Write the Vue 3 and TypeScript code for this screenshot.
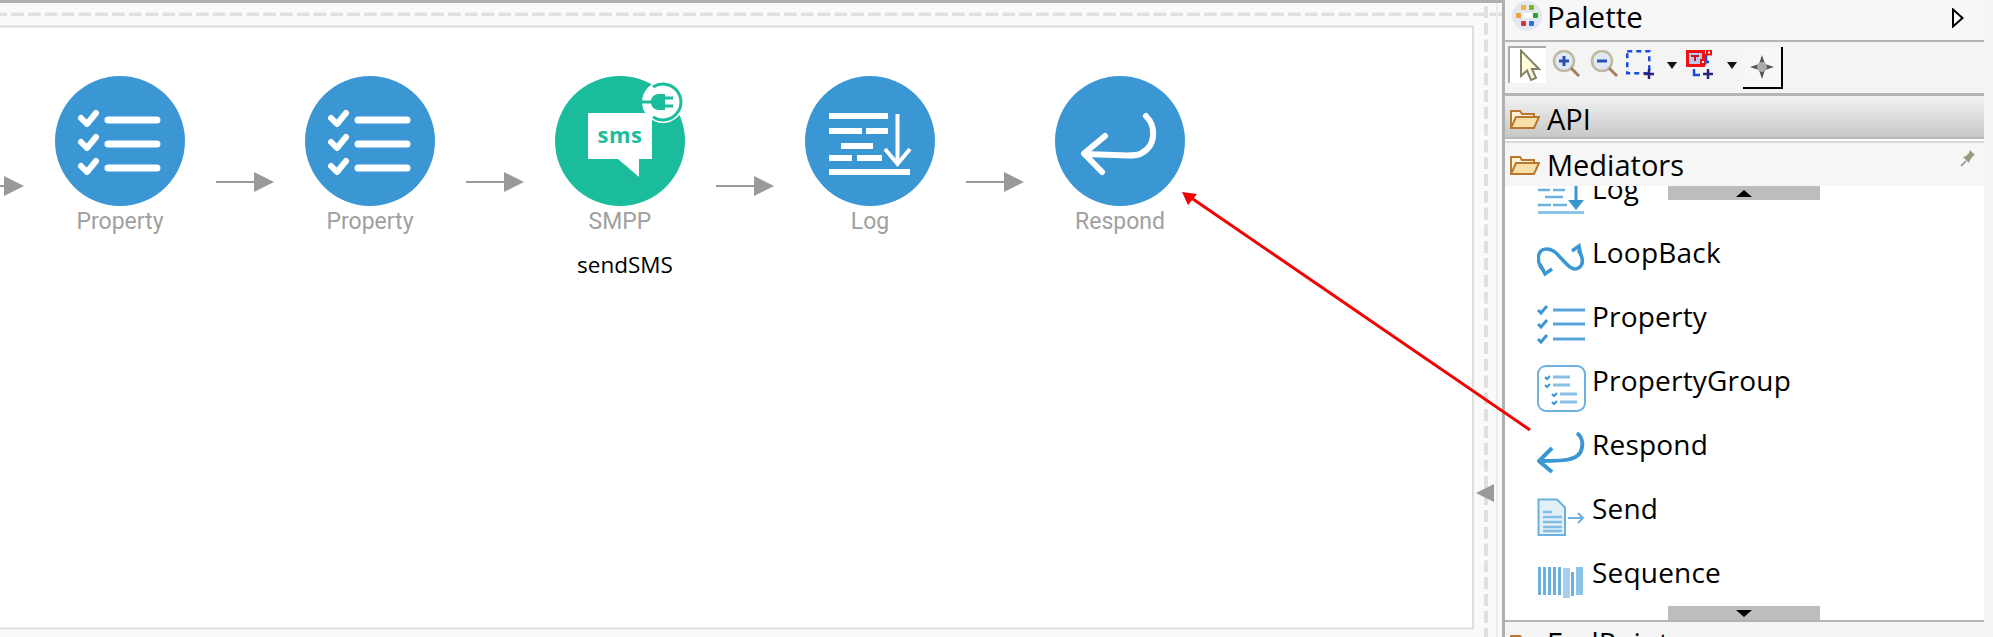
<script setup lang="ts">
interface Node { x: number; label: string; kind: string; caption?: string }
const nodes: Node[] = [
  { x: 120, label: 'Property', kind: 'prop' },
  { x: 370, label: 'Property', kind: 'prop' },
  { x: 620, label: 'SMPP', kind: 'smpp', caption: 'sendSMS' },
  { x: 870, label: 'Log', kind: 'log' },
  { x: 1120, label: 'Respond', kind: 'respond' },
]
const arrows = [
  { x1: -30, x2: 24, y: 186 },
  { x1: 216, x2: 274, y: 182 },
  { x1: 466, x2: 524, y: 182 },
  { x1: 716, x2: 774, y: 186 },
  { x1: 966, x2: 1024, y: 182 },
]
const items = ['Log', 'LoopBack', 'Property', 'PropertyGroup', 'Respond', 'Send', 'Sequence']
const dashesH = Array.from({ length: 90 }, (_, i) => i * 16.8 - 5.5)
const dashesV = Array.from({ length: 38 }, (_, i) => i * 16.8 + 6)
</script>

<template>
  <div class="page">
    <div class="editor">
      <svg class="canvas-deco" width="1502" height="637">
        <rect x="0" y="0" width="1502" height="3" fill="#b0b0b0" />
        <rect x="0" y="3" width="1502" height="634" fill="#fafafa" />
        <rect x="-4" y="26.5" width="1477" height="602" fill="#fff" stroke="#dedede" stroke-width="2" />
        <rect v-for="d in dashesH" :key="'h' + d" :x="d" y="12.5" width="12.5" height="3.5" fill="#e0e0e0" />
        <rect v-for="d in dashesV" :key="'v' + d" x="1484" :y="d" width="4" height="12" fill="#e0e0e0" />
        <rect x="1496" y="3" width="2" height="634" fill="#ececec" />
      </svg>

      <svg class="canvas-deco" width="1502" height="637">
        <g v-for="(a, i) in arrows" :key="i">
          <line :x1="a.x1" :y1="a.y" :x2="a.x2 - 18" :y2="a.y" stroke="#999" stroke-width="2" />
          <polygon :points="`${a.x2 - 20},${a.y - 10} ${a.x2},${a.y} ${a.x2 - 20},${a.y + 10}`" fill="#999" />
        </g>
        <g v-for="(n, i) in nodes" :key="'n' + i" :transform="`translate(${n.x} 141)`">
          <circle r="65" :fill="n.kind === 'smpp' ? '#1abc9c' : '#3a97d4'" />
          <g v-if="n.kind === 'prop'">
            <g v-for="y in [-21, 3, 27]" :key="y">
              <path :d="`M-39 ${y - 2}l6 6 9 -11`" fill="none" stroke="#fff" stroke-width="6" stroke-linecap="round" stroke-linejoin="round" />
              <line x1="-12" :y1="y" x2="37" :y2="y" stroke="#fff" stroke-width="7" stroke-linecap="round" />
            </g>
          </g>
          <g v-if="n.kind === 'log'" fill="#fff">
            <rect x="-41" y="-28" width="59" height="6" />
            <rect x="-41" y="-13" width="33" height="6" />
            <rect x="-4" y="-13" width="22" height="6" />
            <rect x="-29" y="2" width="32" height="6" />
            <rect x="-41" y="14" width="23" height="6" />
            <rect x="-13" y="14" width="25" height="6" />
            <rect x="-41" y="28" width="81" height="6" />
            <path d="M27.500 -27V23" fill="none" stroke="#fff" stroke-width="4" />
            <path d="M15 8l12.500 15 12.500 -15" fill="none" stroke="#fff" stroke-width="4" />
          </g>
          <g v-if="n.kind === 'respond'" fill="none" stroke="#fff" stroke-width="6" stroke-linecap="round" stroke-linejoin="round">
            <path d="M26 -25C36 -15 37 5 20 13C14 16 5 14 -35 13" />
            <path d="M-15 -5L-36 12.500L-18 31" />
          </g>
          <g v-if="n.kind === 'smpp'">
            <path d="M-32 -28H32V18H19V36L-2 18H-32Z" fill="#fff" />
            <text x="0" y="2" class="sms">sms</text>
            <circle cx="43" cy="-39" r="21" fill="#fff" />
            <path d="M33 -54a18 18 0 1 1 0 30" fill="none" stroke="#1abc9c" stroke-width="3" />
            <path d="M38 -47h7v16h-7a8 8 0 0 1 -7 -6.500h-9v-3h9a8 8 0 0 1 7 -6.500Z" fill="#1abc9c" />
            <path d="M45 -43h8M45 -35h8" stroke="#1abc9c" stroke-width="3" />
          </g>
        </g>
      </svg>

      <div
        v-for="(n, i) in nodes"
        :key="'l' + i"
        class="node-label"
        :style="{ left: n.x - 70 + 'px' }"
      >{{ n.label }}</div>
      <div class="node-caption">sendSMS</div>

      <div class="collapse"></div>
    </div>

    <aside class="palette">
      <header class="p-head">
        <svg class="p-logo" width="30" height="30" viewBox="0 0 30 30">
          <circle cx="15" cy="15" r="15" fill="#e2e8ef" />
          <rect x="11" y="12" width="9" height="5" fill="#fff" />
          <rect x="9" y="4" width="5" height="5" rx="1" fill="#e8b83a" /><rect x="17" y="4" width="5" height="5" rx="1" fill="#8ab030" />
          <rect x="4" y="12" width="5" height="5" rx="1" fill="#f0a030" /><rect x="21" y="12" width="5" height="5" rx="1" fill="#30a030" />
          <rect x="9" y="20" width="5" height="5" rx="1" fill="#d83040" /><rect x="17" y="20" width="5" height="5" rx="1" fill="#3070d8" />
        </svg>
        <span class="p-title">Palette</span>
        <svg class="p-collapse" width="12" height="20" viewBox="0 0 12 20"><path d="M1 1.500L10.500 10 1 18.500Z" fill="#fff" stroke="#000" stroke-width="2" /></svg>
      </header>

      <div class="toolbar">
        <div class="tool selected">
          <svg width="24" height="33" viewBox="0 0 24 33"><path d="M4 1.500V27L10 21.500 14 31 19 29 15 20H22Z" fill="#fdfbd8" stroke="#85806a" stroke-width="2" /></svg>
        </div>
        <svg class="t-icon t-zoom" width="28" height="28" viewBox="0 0 28 28">
          <circle cx="12" cy="11" r="10" fill="#dfe8f5" stroke="#c0b8a0" stroke-width="2.500" />
          <path d="M7 11h10M12 6v10" stroke="#2a50b0" stroke-width="3" />
          <path d="M19 18l8 8" stroke="#a08060" stroke-width="3" />
        </svg>
        <svg class="t-icon t-zoom2" width="28" height="28" viewBox="0 0 28 28">
          <circle cx="12" cy="11" r="10" fill="#dfe8f5" stroke="#c0b8a0" stroke-width="2.500" />
          <path d="M7 11h10" stroke="#2a50b0" stroke-width="3" />
          <path d="M19 18l8 8" stroke="#a08060" stroke-width="3" />
        </svg>
        <svg class="t-icon t-marquee" width="30" height="30" viewBox="0 0 30 30">
          <rect x="1.250" y="1.250" width="22" height="22" fill="none" stroke="#1a4ae0" stroke-width="2.500" stroke-dasharray="5 4" />
          <path d="M18 24h10M23 19v10" stroke="#2a2080" stroke-width="2.500" />
        </svg>
        <svg class="caret" width="10" height="7" viewBox="0 0 10 7"><path d="M0 0H10L5 7Z" fill="#111" /></svg>
        <svg class="t-icon t-conn" width="28" height="30" viewBox="0 0 28 30">
          <path d="M8 19v6h6M14 12h9M20 12V4" fill="none" stroke="#1a4ae0" stroke-width="2.500" />
          <rect x="1.500" y="1.500" width="16" height="14" fill="#b8c8f0" stroke="#f01010" stroke-width="3" />
          <path d="M5 6h8M9 6v5" stroke="#d01010" stroke-width="2" />
          <path d="M14 12h8" stroke="#1a4ae0" stroke-width="2.500" />
          <rect x="21" y="0.500" width="4" height="4" fill="#fff" stroke="#f01010" stroke-width="2" />
          <rect x="15" y="10" width="4" height="4" fill="#fff" stroke="#f01010" stroke-width="2" />
          <path d="M17 24h10M22 19v10" stroke="#2a2080" stroke-width="2.500" />
        </svg>
        <svg class="caret" width="10" height="7" viewBox="0 0 10 7"><path d="M0 0H10L5 7Z" fill="#111" /></svg>
        <div class="tool raised">
          <svg width="24" height="24" viewBox="0 0 24 24"><path d="M12 0L15 9 24 12 15 15 12 24 9 15 0 12 9 9Z" fill="#555" /><circle cx="12" cy="12" r="5" fill="#aaa" /></svg>
        </div>
      </div>

      <div class="drawer api">
        <svg class="folder" width="30" height="22" viewBox="0 0 30 22"><path d="M1 20V3h9l2 3h12v4" fill="#fff4d8" stroke="#b87830" stroke-width="2" /><path d="M1 20l5 -11h23l-5 11Z" fill="#f8e0a8" stroke="#b87830" stroke-width="2" /></svg>
        <span>API</span>
      </div>
      <div class="drawer mediators">
        <svg class="folder" width="30" height="22" viewBox="0 0 30 22"><path d="M1 20V3h9l2 3h12v4" fill="#fff4d8" stroke="#b87830" stroke-width="2" /><path d="M1 20l5 -11h23l-5 11Z" fill="#f8e0a8" stroke="#b87830" stroke-width="2" /></svg>
        <span>Mediators</span>
        <svg class="pin" width="16" height="18" viewBox="0 0 16 18"><path d="M1 17l5 -5" stroke="#888" stroke-width="1.500" /><path d="M10 1l5 5 -2 1 -3 4 -1 3 -6 -6 3 -1 3 -3Z" fill="#9a9a80" /></svg>
      </div>

      <div class="list">
        <div class="list-inner">
          <div v-for="it in items" :key="it" class="item">
            <svg class="m-icon" width="50" height="48" viewBox="0 0 50 48">
              <g v-if="it === 'Log'">
                <path d="M1 18h12M16 18h12M8 25h18M1 33h13M16 33h14" stroke="#6ab1e0" stroke-width="2.500" fill="none" />
                <rect x="1" y="39" width="46" height="3" fill="#8cc4e8" />
                <path d="M39 10V30" stroke="#3a97d4" stroke-width="3" />
                <path d="M31 28H47L39 38Z" fill="#3a97d4" />
              </g>
              <g v-if="it === 'LoopBack'" fill="none" stroke="#3a97d4" stroke-width="3.500">
                <path d="M7 35C-1 27 -1 13 10 13C19 13 24 24 33 31C40 36 47 30 45 22C44 18 43 16 41 14" />
                <path d="M35 15L42 10 44 20" /><path d="M3 28L8 38 15 33" />
              </g>
              <g v-if="it === 'Property'" stroke="#3a97d4">
                <g v-for="y in [10, 24, 39]" :key="y">
                  <path :d="`M1 ${y}l3 3 6 -7`" fill="none" stroke-width="3" />
                  <line x1="16" :y1="y" x2="48" :y2="y" stroke-width="3" opacity=".85" />
                </g>
              </g>
              <g v-if="it === 'PropertyGroup'" stroke="#3a97d4">
                <rect x="1" y="2" width="47" height="45" rx="8" fill="#fff" stroke="#6ab1e0" stroke-width="2" />
                <path d="M8 13l2 2 3 -3M8 21l2 2 3 -3M15 30l2 2 3 -3M15 38l2 2 3 -3" fill="none" stroke-width="2" />
                <path d="M16 13h17M16 21h17M23 30h17M23 38h17" stroke-width="3" opacity=".6" />
              </g>
              <g v-if="it === 'Respond'" fill="none" stroke="#3a97d4" stroke-width="4">
                <path d="M40 5C48 11 48 28 33 31C28 33 10 33 2 33" />
                <path d="M15 20L2 33 15 44" />
              </g>
              <g v-if="it === 'Send'" stroke="#6ab1e0">
                <path d="M1.500 7.500H20L28 15.500V43H1.500Z" fill="#e2f0fa" stroke-width="2" />
                <path d="M6 20h9M6 25h19M6 30h19M6 35h19M6 39h19" stroke-width="2.500" opacity=".8" />
                <path d="M31 26h15M41 21l5 5 -5 5" fill="none" stroke-width="2" />
              </g>
              <g v-if="it === 'Sequence'" fill="#6ab1e0">
                <rect v-for="x in [1, 6, 11, 16, 21]" :key="x" :x="x" y="11" width="3" height="28" />
                <rect x="26" y="12" width="7" height="30" fill="#a8d0ec" />
                <rect x="34" y="16" width="3" height="24" />
                <rect x="39" y="11" width="7" height="28" fill="#8cc4e8" />
              </g>
            </svg>
            <span>{{ it }}</span>
          </div>
        </div>
        <div class="scroll up"><i></i></div>
        <div class="scroll down"><i></i></div>
      </div>

      <div class="drawer endpoint">
        <svg class="folder" width="30" height="22" viewBox="0 0 30 22"><path d="M1 20V3h9l2 3h12v4" fill="#fff4d8" stroke="#b87830" stroke-width="2" /></svg>
        <span>EndPoint</span>
      </div>
    </aside>

    <svg class="annot" width="1993" height="637">
      <line x1="1530" y1="430" x2="1190" y2="197" stroke="#f40000" stroke-width="3" />
      <polygon points="1182,192 1197,194 1188,205" fill="#f40000" />
    </svg>
  </div>
</template>

<style scoped>
.page {
  position: relative;
  width: 1993px;
  height: 637px;
  display: flex;
  overflow: hidden;
  background: #fff;
  font-family: "Open Sans", "Noto Sans", sans-serif;
  color: #000;
}
.editor {
  position: relative;
  width: 1502px;
  flex: none;
  height: 100%;
}
.canvas-deco { position: absolute; left: 0; top: 0; }
.sms { fill: #1abc9c; font: 700 22px "Open Sans", sans-serif; text-anchor: middle; letter-spacing: 0.5px; }
.node-label {
  position: absolute;
  top: 208px;
  width: 140px;
  text-align: center;
  font: 23px/28px Roboto, sans-serif;
  color: #a0a0a0;
}
.node-caption {
  position: absolute;
  left: 555px;
  top: 250px;
  width: 140px;
  text-align: center;
  font-size: 22.5px;
  line-height: 30px;
}
.collapse {
  position: absolute;
  left: 1476px;
  top: 484px;
  width: 0;
  height: 0;
  border-style: solid;
  border-width: 9px 18px 9px 0;
  border-color: transparent #9a9a9a transparent transparent;
}
.palette {
  flex: 1;
  display: flex;
  flex-direction: column;
  height: 100%;
  border-left: 3px solid #b0b0b0;
  border-right: 9px solid #f4f4f4;
  background: #fff;
  box-sizing: border-box;
  min-width: 0;
}
.p-head {
  height: 40px;
  flex: none;
  display: flex;
  align-items: center;
  padding: 0 20px 0 7px;
  background: #f7f7f7;
  border-bottom: 2px solid #b4b4b4;
}
.p-logo { margin: -8px 5px 0 0; flex: none; }
.p-title { font-size: 29.5px; line-height: 34px; margin-top: -6px; }
.p-collapse { margin: -4px 0 0 auto; }
.toolbar {
  height: 51px;
  flex: none;
  display: flex;
  align-items: center;
  padding-left: 3px;
  background: #f4f4f4;
  border-bottom: 3px solid #b4b4b4;
  box-sizing: content-box;
}
.tool { box-sizing: border-box; display: flex; align-items: center; justify-content: center; flex: none; }
.tool.selected { width: 38px; height: 37px; background: #fff; border-top: 2px solid #aaa; border-left: 2px solid #aaa; margin-top: -6px; padding-left: 2px; }
.tool.raised { width: 40px; height: 42px; background: #f7f7f7; border-right: 2px solid #000; border-bottom: 2px solid #000; margin-left: 6px; }
.t-icon { margin-top: -7px; flex: none; }
.t-zoom { margin-left: 6px; }
.t-zoom2 { margin-left: 10px; }
.t-marquee { margin-left: 8px; margin-top: -6px; }
.t-conn { margin-left: 9px; margin-top: -6px; }
.caret { margin: -4px 0 0 11px; flex: none; }
.t-conn + .caret { margin-left: 13px; }
.drawer {
  flex: none;
  display: flex;
  align-items: center;
  padding-left: 5px;
  box-sizing: border-box;
  font-size: 29px;
}
.drawer .folder { margin-right: 7px; flex: none; }
.api {
  height: 43px;
  padding-top: 4px;
  background: linear-gradient(#f2f2f2, #c8c8c8);
  border-bottom: 2px solid #b8b8b8;
}
.mediators {
  height: 47px;
  padding-top: 2px;
  background: #f6f6f6;
  border-top: 2px solid #fff;
  box-shadow: inset 0 2px 0 #d8d8d8;
  position: relative;
}
.pin { position: absolute; right: 8px; top: 8px; }
.list {
  position: relative;
  height: 434px;
  flex: none;
  overflow: hidden;
  background: #fff;
  border-bottom: 2px solid #b4b4b4;
  box-sizing: content-box;
}
.list-inner { margin-top: -22px; padding-left: 32px; }
.item {
  height: 64px;
  display: flex;
  align-items: center;
  font-size: 28px;
  line-height: 34px;
  letter-spacing: 0.2px;
}
.item span { margin-left: 5px; margin-top: -16px; }
.m-icon { flex: none; }
.scroll {
  position: absolute;
  left: 163px;
  width: 152px;
  height: 14px;
  background: #bdbdbd;
  display: flex;
  align-items: center;
  justify-content: center;
}
.scroll.up { top: 0; }
.scroll.down { bottom: 0; }
.scroll i { width: 0; height: 0; border-style: solid; border-color: transparent; }
.up i { border-width: 0 8px 7px; border-bottom-color: #000; }
.down i { border-width: 7px 8px 0; border-top-color: #000; }
.endpoint { background: #f4f4f4; align-items: flex-start; padding-top: 1px; flex: 1; min-height: 0; }
.endpoint .folder { margin-top: 10px; }
.annot { position: absolute; left: 0; top: 0; pointer-events: none; }
</style>
